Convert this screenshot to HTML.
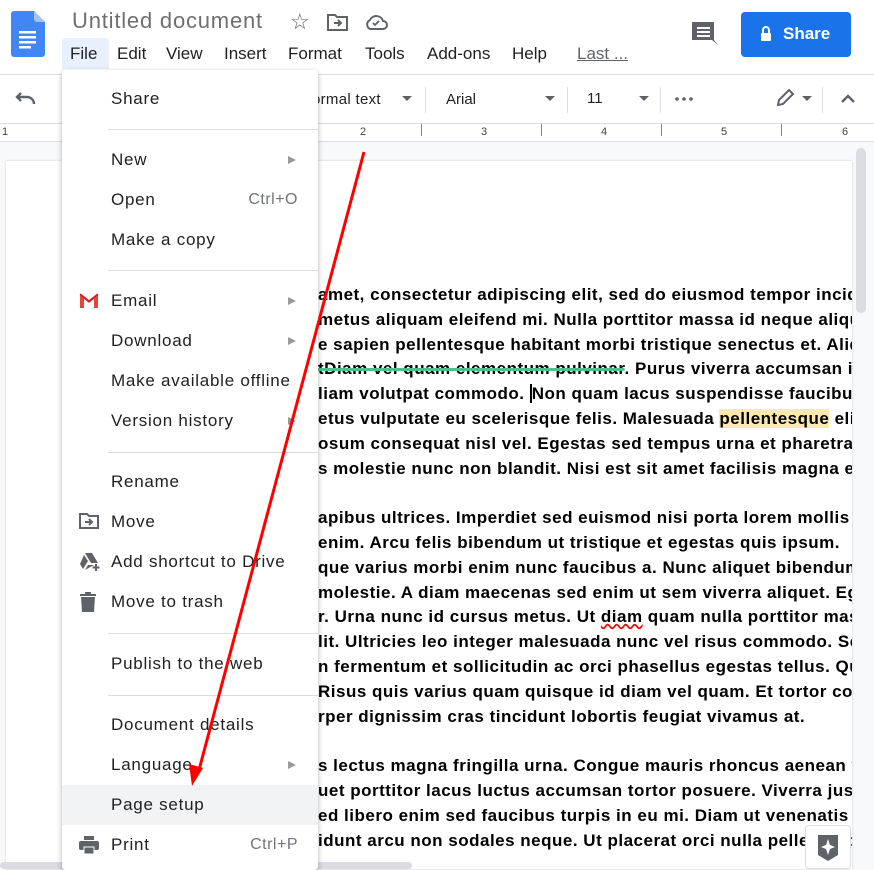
<!DOCTYPE html>
<html><head><meta charset="utf-8">
<style>
*{margin:0;padding:0;box-sizing:border-box}
body{width:874px;height:869px;overflow:hidden;background:#f8f9fa;font-family:"Liberation Sans",Arial,sans-serif;position:relative}
.abs{position:absolute}
.hdr{left:0;top:0;width:874px;height:75px;background:#fff;border-bottom:1px solid #dadce0}
.title{left:72px;top:8px;font-size:22px;letter-spacing:.8px;color:#6f6f6f}
.menu{top:44px;font-size:17px;color:#202124}
.tb{left:0;top:75px;width:874px;height:49px;background:#fff;border-bottom:1px solid #dadce0}
.ruler{left:0;top:124px;width:874px;height:18px;background:#fff;border-bottom:1px solid #dadce0;font-size:11px;color:#444}
.page{left:6px;top:161px;width:846px;height:708px;background:#fff;box-shadow:0 0 2px #ccc}
.txt{left:318px;top:283px;width:534px;overflow:hidden;white-space:nowrap;font-weight:bold;font-size:17px;letter-spacing:.5px;color:#000;line-height:24.8px}
.dd{left:62px;top:70px;width:256px;height:800px;background:#fff;box-shadow:0 2px 6px rgba(0,0,0,.3);border-radius:4px}
.it{position:absolute;left:49px;font-size:17px;color:#202124;letter-spacing:.75px}
.sc{position:absolute;right:20px;font-size:16px;color:#70757a;letter-spacing:.5px}
.ar{position:absolute;left:226px;width:0;height:0;border-left:8px solid #999;border-top:4px solid transparent;border-bottom:4px solid transparent}
.sep{position:absolute;left:46px;width:210px;height:1px;background:#dadce0}
.ic{position:absolute;left:17px}
</style></head><body>
<div class="abs hdr"></div>
<svg class="abs" style="left:11px;top:11px" width="34" height="46" viewBox="0 0 34 46"><path d="M3 0h20l11 11v32a3 3 0 0 1-3 3H3a3 3 0 0 1-3-3V3a3 3 0 0 1 3-3z" fill="#4285f4"/><path d="M23 0l11 11H26a3 3 0 0 1-3-3z" fill="#a1c2fa"/><rect x="8" y="20" width="17" height="2.5" fill="#fff"/><rect x="8" y="25" width="17" height="2.5" fill="#fff"/><rect x="8" y="30" width="17" height="2.5" fill="#fff"/><rect x="8" y="35" width="12" height="2.5" fill="#fff"/></svg>
<div class="abs title">Untitled document</div>
<div class="abs" style="left:290px;top:9px;font-size:22px;color:#5f6368">☆</div>
<svg class="abs" style="left:327px;top:13px" width="22" height="18" viewBox="0 0 22 18"><path d="M1 2h7l2 2h10v13H1z" fill="none" stroke="#5f6368" stroke-width="2"/><path d="M7 10h7M11 7l3 3-3 3" stroke="#5f6368" stroke-width="2" fill="none"/></svg>
<svg class="abs" style="left:364px;top:12px" width="24" height="20" viewBox="0 0 24 20"><path d="M6 17h13a4 4 0 0 0 0-8 7 7 0 0 0-13-1 5 5 0 0 0 0 9z" fill="none" stroke="#5f6368" stroke-width="2"/><path d="M9 11l2 2 4-4" stroke="#5f6368" stroke-width="1.8" fill="none"/></svg>
<div class="abs" style="left:62px;top:38px;width:47px;height:31px;background:#e8f0fe;border-radius:4px 4px 0 0"></div>
<div class="abs menu" style="left:70px">File</div>
<div class="abs menu" style="left:117px">Edit</div>
<div class="abs menu" style="left:166px">View</div>
<div class="abs menu" style="left:224px">Insert</div>
<div class="abs menu" style="left:288px">Format</div>
<div class="abs menu" style="left:365px">Tools</div>
<div class="abs menu" style="left:427px">Add-ons</div>
<div class="abs menu" style="left:512px">Help</div>
<div class="abs menu" style="left:577px;color:#5f6368;text-decoration:underline">Last ...</div>
<svg class="abs" style="left:690px;top:20px" width="28" height="26" viewBox="0 0 28 26"><path d="M2 2h22v18l4 5-6-5H2z" fill="#5f6368"/><rect x="7" y="7" width="13" height="2" fill="#fff"/><rect x="7" y="11" width="13" height="2" fill="#fff"/><rect x="7" y="15" width="13" height="2" fill="#fff"/></svg>
<div class="abs" style="left:741px;top:12px;width:110px;height:45px;background:#1a73e8;border-radius:4px;color:#fff;font-size:17px;font-weight:bold"><svg style="position:absolute;left:19px;top:14px" width="12" height="16" viewBox="0 0 12 16"><rect x="1" y="7" width="10" height="8" rx="1" fill="#fff"/><path d="M3 7V4a3 3 0 0 1 6 0v3" stroke="#fff" stroke-width="2" fill="none"/></svg><span style="position:absolute;left:42px;top:12px">Share</span></div>

<div class="abs tb"></div>
<svg class="abs" style="left:15px;top:90px" width="22" height="16" viewBox="0 0 22 16"><path d="M6 3L2 7l4 4" stroke="#5f6368" stroke-width="2.4" fill="none"/><path d="M2 7h10a7 7 0 0 1 7 7" stroke="#5f6368" stroke-width="2.4" fill="none"/></svg>
<div class="abs" style="left:312px;top:91px;font-size:15px;color:#222;letter-spacing:.3px">ormal text</div>
<div class="abs" style="left:402px;top:96px;border-left:5px solid transparent;border-right:5px solid transparent;border-top:5px solid #5f6368"></div>
<div class="abs" style="left:425px;top:87px;width:1px;height:26px;background:#dadce0"></div>
<div class="abs" style="left:446px;top:91px;font-size:15px;color:#222">Arial</div>
<div class="abs" style="left:545px;top:96px;border-left:5px solid transparent;border-right:5px solid transparent;border-top:5px solid #5f6368"></div>
<div class="abs" style="left:567px;top:87px;width:1px;height:26px;background:#dadce0"></div>
<div class="abs" style="left:587px;top:90px;font-size:15px;color:#222">11</div>
<div class="abs" style="left:639px;top:96px;border-left:5px solid transparent;border-right:5px solid transparent;border-top:5px solid #5f6368"></div>
<div class="abs" style="left:660px;top:87px;width:1px;height:26px;background:#dadce0"></div>
<svg class="abs" style="left:675px;top:97px" width="18" height="4"><circle cx="2" cy="2" r="1.8" fill="#5f6368"/><circle cx="9" cy="2" r="1.8" fill="#5f6368"/><circle cx="16" cy="2" r="1.8" fill="#5f6368"/></svg>
<svg class="abs" style="left:775px;top:88px" width="20" height="20" viewBox="0 0 20 20"><path d="M3 17l1-5L14 2l4 4L8 16z" fill="none" stroke="#5f6368" stroke-width="2"/></svg>
<div class="abs" style="left:802px;top:96px;border-left:5px solid transparent;border-right:5px solid transparent;border-top:5px solid #5f6368"></div>
<div class="abs" style="left:822px;top:87px;width:1px;height:26px;background:#dadce0"></div>
<svg class="abs" style="left:840px;top:92px" width="16" height="12" viewBox="0 0 16 12"><path d="M2 10l6-6 6 6" stroke="#5f6368" stroke-width="2.4" fill="none"/></svg>

<div class="abs ruler">
<span class="abs" style="left:2px;top:2px">1</span>
<span class="abs" style="left:360px;top:2px">2</span>
<span class="abs" style="left:481px;top:2px">3</span>
<span class="abs" style="left:601px;top:2px">4</span>
<span class="abs" style="left:721px;top:2px">5</span>
<span class="abs" style="left:842px;top:2px">6</span>
<span class="abs" style="left:421px;top:0;width:1px;height:12px;background:#888"></span>
<span class="abs" style="left:541px;top:0;width:1px;height:12px;background:#888"></span>
<span class="abs" style="left:661px;top:0;width:1px;height:12px;background:#888"></span>
<span class="abs" style="left:781px;top:0;width:1px;height:12px;background:#888"></span>
</div>
<div class="abs" style="left:856px;top:148px;width:10px;height:165px;background:#dadce0;border-radius:5px"></div>
<div class="abs page"></div>
<div class="abs" style="left:0;top:862px;width:412px;height:7px;background:#dadce0;border-radius:4px"></div>

<div class="abs txt">
<div>amet, consectetur adipiscing elit, sed do eiusmod tempor incididunt</div>
<div>metus aliquam eleifend mi. Nulla porttitor massa id neque aliquam</div>
<div>e sapien pellentesque habitant morbi tristique senectus et. Aliquam</div>
<div><span style="text-decoration:line-through;text-decoration-color:#57bb8a;text-decoration-thickness:3px">tDiam vel quam elementum pulvinar</span>. Purus viverra accumsan in</div>
<div>liam volutpat commodo. <span style="border-left:2px solid #000">N</span>on quam lacus suspendisse faucibus</div>
<div>etus vulputate eu scelerisque felis. Malesuada <span style="background:#fce8b2">pellentesque</span> elit</div>
<div>osum consequat nisl vel. Egestas sed tempus urna et pharetra</div>
<div>s molestie nunc non blandit. Nisi est sit amet facilisis magna etiam</div>
<div>&nbsp;</div>
<div>apibus ultrices. Imperdiet sed euismod nisi porta lorem mollis</div>
<div>enim. Arcu felis bibendum ut tristique et egestas quis ipsum.</div>
<div>que varius morbi enim nunc faucibus a. Nunc aliquet bibendum</div>
<div>molestie. A diam maecenas sed enim ut sem viverra aliquet. Eget</div>
<div>r. Urna nunc id cursus metus. Ut <span style="text-decoration:underline wavy red">diam</span> quam nulla porttitor massa</div>
<div>lit. Ultricies leo integer malesuada nunc vel risus commodo. Sed</div>
<div>n fermentum et sollicitudin ac orci phasellus egestas tellus. Quis</div>
<div>Risus quis varius quam quisque id diam vel quam. Et tortor consequat</div>
<div>rper dignissim cras tincidunt lobortis feugiat vivamus at.</div>
<div>&nbsp;</div>
<div>s lectus magna fringilla urna. Congue mauris rhoncus aenean vel</div>
<div>uet porttitor lacus luctus accumsan tortor posuere. Viverra justo</div>
<div>ed libero enim sed faucibus turpis in eu mi. Diam ut venenatis</div>
<div>idunt arcu non sodales neque. Ut placerat orci nulla pellentesque</div>
</div>
<div class="abs" style="left:805px;top:825px;width:46px;height:44px;background:#fff;border:1px solid #dadce0;border-radius:4px"><svg style="position:absolute;left:11px;top:8px" width="22" height="28" viewBox="0 0 22 28"><path d="M1 1h20v20l-10 6-10-6z" fill="#5f6368"/><path d="M11 5l2 6 5 2-5 2-2 6-2-6-5-2 5-2z" fill="#fff"/></svg></div>

<div class="abs dd">
<div class="it" style="top:19px">Share</div>
<div class="sep" style="top:59px"></div>
<div class="it" style="top:80px">New</div><div class="ar" style="top:86px"></div>
<div class="it" style="top:120px">Open</div><div class="sc" style="top:121px">Ctrl+O</div>
<div class="it" style="top:160px">Make a copy</div>
<div class="sep" style="top:200px"></div>
<svg class="ic" style="top:223px" width="20" height="15" viewBox="0 0 20 15"><path d="M1 1v14h4V6l5 4 5-4v9h4V1l-9 7z" fill="#ea4335"/><path d="M1 1l9 7 9-7" fill="none" stroke="#c5221f" stroke-width="1.5"/></svg>
<div class="it" style="top:221px">Email</div><div class="ar" style="top:227px"></div>
<div class="it" style="top:261px">Download</div><div class="ar" style="top:267px"></div>
<div class="it" style="top:301px">Make available offline</div>
<div class="it" style="top:341px">Version history</div><div class="ar" style="top:347px"></div>
<div class="sep" style="top:382px"></div>
<div class="it" style="top:402px">Rename</div>
<svg class="ic" style="top:443px" width="20" height="16" viewBox="0 0 20 16"><path d="M1 1h7l2 2h9v12H1z" fill="none" stroke="#5f6368" stroke-width="2"/><path d="M6 9h7M10 6l3 3-3 3" stroke="#5f6368" stroke-width="2" fill="none"/></svg>
<div class="it" style="top:442px">Move</div>
<svg class="ic" style="top:482px" width="22" height="20" viewBox="0 0 22 20"><path d="M6 1h7l6 10h-7zM5 3l4 6-5 8-3-5zM6 18l3-5h6" fill="#5f6368"/><path d="M17 12v7M13.5 15.5h7" stroke="#5f6368" stroke-width="2"/></svg>
<div class="it" style="top:482px">Add shortcut to Drive</div>
<svg class="ic" style="top:522px" width="18" height="20" viewBox="0 0 18 20"><rect x="1" y="2" width="16" height="2" fill="#5f6368"/><rect x="6" y="0" width="6" height="3" fill="#5f6368"/><path d="M2 5h14l-1 15H3z" fill="#5f6368"/></svg>
<div class="it" style="top:522px">Move to trash</div>
<div class="sep" style="top:563px"></div>
<div class="it" style="top:584px">Publish to the web</div>
<div class="sep" style="top:625px"></div>
<div class="it" style="top:645px">Document details</div>
<div class="it" style="top:685px">Language</div><div class="ar" style="top:691px"></div>
<div style="position:absolute;left:0;top:715px;width:256px;height:40px;background:#f1f3f4"></div>
<div class="it" style="top:725px">Page setup</div>
<svg class="ic" style="top:766px" width="20" height="18" viewBox="0 0 20 18"><rect x="5" y="0" width="10" height="4" fill="#5f6368"/><rect x="0" y="5" width="20" height="9" rx="2" fill="#5f6368"/><rect x="5" y="11" width="10" height="7" fill="#5f6368" stroke="#fff" stroke-width="1"/></svg>
<div class="it" style="top:765px">Print</div><div class="sc" style="top:766px">Ctrl+P</div>
</div>

<svg class="abs" style="left:0;top:0" width="874" height="869"><line x1="364" y1="152" x2="199" y2="770" stroke="#f00" stroke-width="3"/><path d="M192 786l-3-22 14 4z" fill="#f00"/></svg>
</body></html>
